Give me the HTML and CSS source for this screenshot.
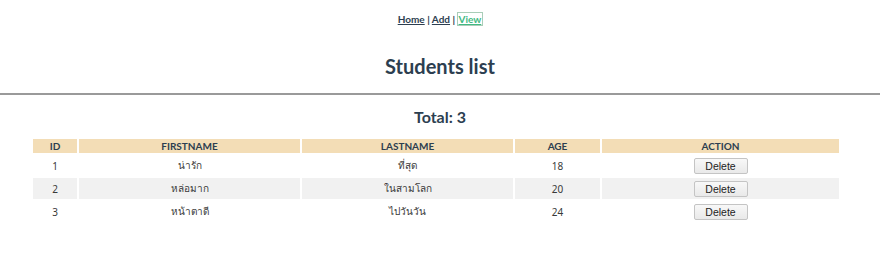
FILE: index.html
```html
<!DOCTYPE html>
<html>
<head>
<meta charset="utf-8">
<link rel="stylesheet" href="styles.css">
</head>
<body>
<div class="app">
  <nav class="nav">
    <a href="#" class="link">Home</a> | <a href="#" class="link">Add</a> | <a href="#" class="link active">View</a>
  </nav>
  <h1 class="title">Students list</h1>
  <hr class="rule">
  <h2 class="total">Total: 3</h2>
  <table class="students">
    <thead>
      <tr><th class="c-id">ID</th><th class="c-first">FIRSTNAME</th><th class="c-last">LASTNAME</th><th class="c-age">AGE</th><th class="c-action">ACTION</th></tr>
    </thead>
    <tbody>
      <tr><td>1</td><td>น่ารัก</td><td>ที่สุด</td><td>18</td><td><button class="btn">Delete</button></td></tr>
      <tr class="alt"><td>2</td><td>หล่อมาก</td><td>ในสามโลก</td><td>20</td><td><button class="btn">Delete</button></td></tr>
      <tr><td>3</td><td>หน้าตาดี</td><td>ไปวันวัน</td><td>24</td><td><button class="btn">Delete</button></td></tr>
    </tbody>
  </table>
</div>
</body>
</html>
```
FILE: styles.css
```css
html, body {
  margin: 0;
  padding: 0;
  background: #fff;
}
.app {
  font-family: Lato, "Noto Sans", sans-serif;
  color: #2c3e50;
  text-align: center;
}
.nav {
  padding-top: 12px;
  font-size: 10px;
  font-weight: bold;
  line-height: 14px;
}
.link {
  color: #2c3e50;
  text-decoration: underline;
}
.link.active {
  color: #42b983;
  outline: 1px solid #a9cdb8;
  padding: 0 1px;
}
.title {
  margin: 27px 0 0;
  font-size: 20px;
  line-height: 26px;
  font-weight: bold;
}
.rule {
  margin: 14px 0 0;
  border: 0;
  height: 2px;
  background: #9a9a9a;
}
.total {
  margin: 12px 0 0;
  font-size: 16px;
  line-height: 20px;
  font-weight: bold;
}
.students {
  margin: 10px 0 0 31px;
  width: 810px;
  border-spacing: 2px;
  font-family: "Noto Sans", "Liberation Sans", sans-serif;
  font-size: 10px;
}
.students th {
  background: #f3ddb6;
  font-family: Lato, "Noto Sans", sans-serif;
  font-weight: bold;
  font-size: 10px;
  height: 14px;
  padding: 0;
  line-height: 14px;
}
.c-id { width: 44px; }
.c-first { width: 221px; }
.c-last { width: 211px; }
.c-age { width: 85px; }
.students td {
  height: 21px;
  padding: 0;
  color: #3a3a3a;
}
.students tr.alt td {
  background: #f1f1f1;
}
.btn {
  font-family: "Liberation Sans", Arial, sans-serif;
  font-size: 10.5px;
  color: #222;
  width: 54px;
  height: 16px;
  padding: 0;
  border: 1px solid #c4c4c4;
  border-radius: 2px;
  background: linear-gradient(#f8f8f8, #e9e9e9);
}
```
